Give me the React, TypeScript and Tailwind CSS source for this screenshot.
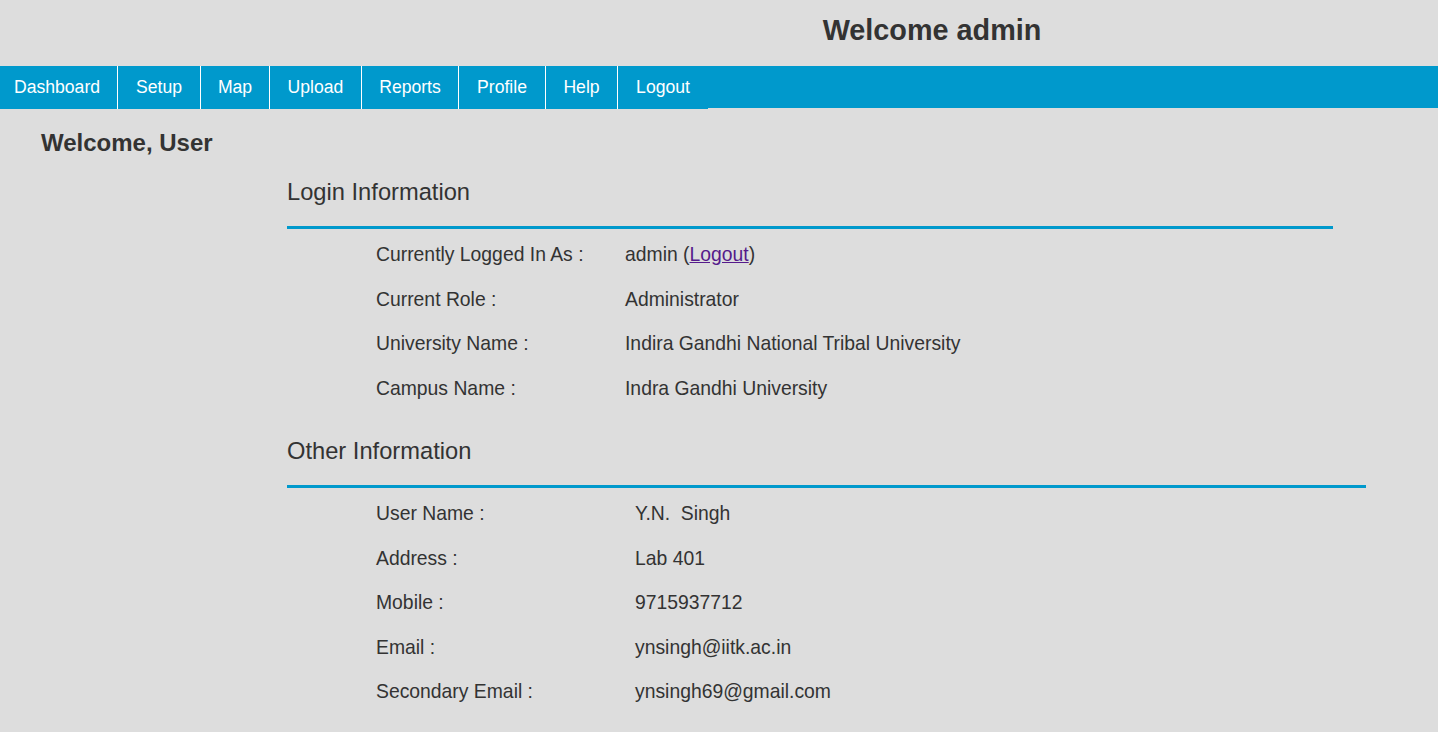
const navItems = [
  { label: 'Dashboard', w: 'w-[118px]' },
  { label: 'Setup', w: 'w-[83px]' },
  { label: 'Map', w: 'w-[69px]' },
  { label: 'Upload', w: 'w-[92px]' },
  { label: 'Reports', w: 'w-[97px]' },
  { label: 'Profile', w: 'w-[87px]' },
  { label: 'Help', w: 'w-[72px]' },
  { label: 'Logout', w: 'w-[90px]' },
]

const otherInfo = [
  { label: 'User Name :', value: 'Y.N.  Singh' },
  { label: 'Address :', value: 'Lab 401' },
  { label: 'Mobile :', value: '9715937712' },
  { label: 'Email :', value: 'ynsingh@iitk.ac.in' },
  { label: 'Secondary Email :', value: 'ynsingh69@gmail.com' },
]

function InfoRow({ label, labelWidth, children }: { label: string; labelWidth: string; children: React.ReactNode }) {
  return (
    <div className="flex h-[44.5px] items-center pl-[89px]">
      <div className={labelWidth}>{label}</div>
      <div className="whitespace-pre">{children}</div>
    </div>
  )
}

export default function App() {
  return (
    <div
      className="min-h-[732px] bg-[#dddddd] text-[#333333]"
      style={{ fontFamily: '"Liberation Sans", Arial, sans-serif' }}
    >
      {/* Top title */}
      <div className="h-[66px] pt-[13px] pl-[426px] text-center">
        <h1 className="text-[28.8px] font-bold leading-[34px]">Welcome admin</h1>
      </div>

      {/* Nav bar */}
      <ul className="flex h-[42px] bg-[#0099cc]">
        {navItems.map((item, i) => (
          <li
            key={item.label}
            className={`${item.w} h-[43px] bg-[#0099cc] text-center text-[17.6px] leading-[42px] text-white ${
              i < navItems.length - 1 ? 'border-r border-white' : ''
            } ${i === 0 ? 'pr-[3px]' : ''}`}
          >
            {item.label}
          </li>
        ))}
      </ul>

      <h2 className="mt-[21px] pl-[41px] text-[24px] font-bold leading-[28px]">Welcome, User</h2>

      <div className="ml-[287px] text-[19.35px]">
        {/* Login information */}
        <h3 className="mt-[20px] text-[23.7px] leading-[30px]">Login Information</h3>
        <div className="mt-[19px] h-[3px] w-[1046px] bg-[#0099cc]" />
        <div className="mt-[3.75px]">
          <InfoRow label="Currently Logged In As :" labelWidth="w-[249px]">
            admin (<a href="#" className="text-[#551a8b] underline">Logout</a>)
          </InfoRow>
          <InfoRow label="Current Role :" labelWidth="w-[249px]">Administrator</InfoRow>
          <InfoRow label="University Name :" labelWidth="w-[249px]">Indira Gandhi National Tribal University</InfoRow>
          <InfoRow label="Campus Name :" labelWidth="w-[249px]">Indra Gandhi University</InfoRow>
        </div>

        {/* Other information */}
        <h3 className="mt-[25.25px] text-[23.7px] leading-[30px]">Other Information</h3>
        <div className="mt-[19px] h-[3px] w-[1079px] bg-[#0099cc]" />
        <div className="mt-[3.75px]">
          {otherInfo.map((row) => (
            <InfoRow key={row.label} label={row.label} labelWidth="w-[259px]">
              {row.value}
            </InfoRow>
          ))}
        </div>
      </div>
    </div>
  )
}
